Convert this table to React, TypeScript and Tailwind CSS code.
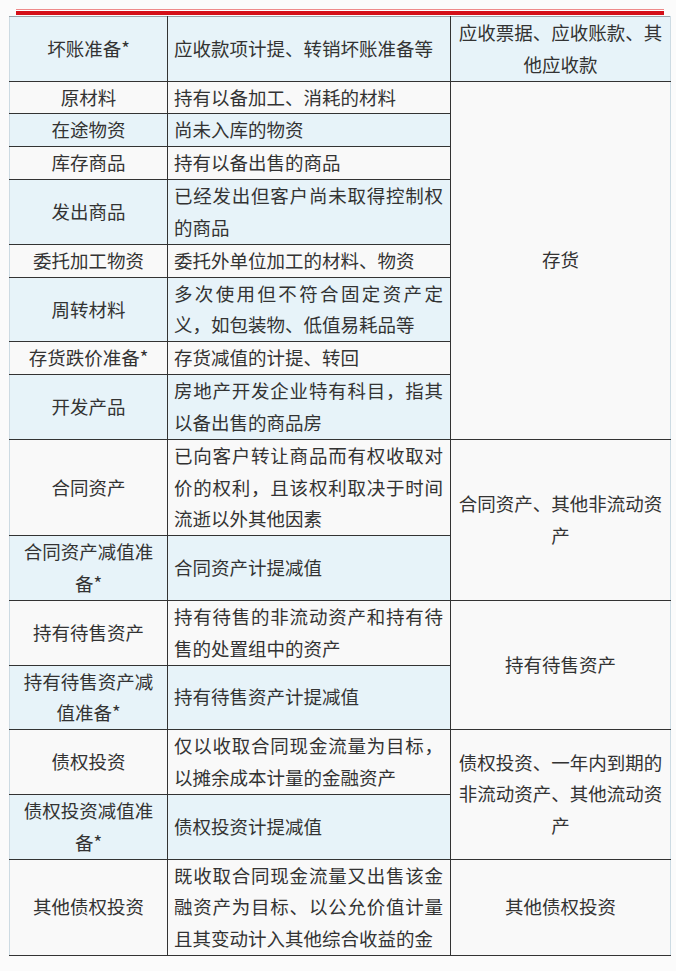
import React from 'react';

type Row = {
  name: string;
  desc: string;
  target?: string;
  span?: number;
};

const rows: Row[] = [
  { name: '坏账准备*', desc: '应收款项计提、转销坏账准备等', target: '应收票据、应收账款、其他应收款', span: 1 },
  { name: '原材料', desc: '持有以备加工、消耗的材料', target: '存货', span: 8 },
  { name: '在途物资', desc: '尚未入库的物资' },
  { name: '库存商品', desc: '持有以备出售的商品' },
  { name: '发出商品', desc: '已经发出但客户尚未取得控制权的商品' },
  { name: '委托加工物资', desc: '委托外单位加工的材料、物资' },
  { name: '周转材料', desc: '多次使用但不符合固定资产定义，如包装物、低值易耗品等' },
  { name: '存货跌价准备*', desc: '存货减值的计提、转回' },
  { name: '开发产品', desc: '房地产开发企业特有科目，指其以备出售的商品房' },
  { name: '合同资产', desc: '已向客户转让商品而有权收取对价的权利，且该权利取决于时间流逝以外其他因素', target: '合同资产、其他非流动资产', span: 2 },
  { name: '合同资产减值准备*', desc: '合同资产计提减值' },
  { name: '持有待售资产', desc: '持有待售的非流动资产和持有待售的处置组中的资产', target: '持有待售资产', span: 2 },
  { name: '持有待售资产减值准备*', desc: '持有待售资产计提减值' },
  { name: '债权投资', desc: '仅以收取合同现金流量为目标，以摊余成本计量的金融资产', target: '债权投资、一年内到期的非流动资产、其他流动资产', span: 2 },
  { name: '债权投资减值准备*', desc: '债权投资计提减值' },
  { name: '其他债权投资', desc: '既收取合同现金流量又出售该金融资产为目标、以公允价值计量且其变动计入其他综合收益的金', target: '其他债权投资', span: 1 },
];

export default function App() {
  return (
    <div
      className="min-h-screen bg-[#fbfbfb] text-[#333] pt-[9px]"
      style={{ fontFamily: '"Noto Sans CJK SC", "Noto Sans", sans-serif' }}
    >
      {/* red double rule */}
      <div className="ml-[16px] mr-[12px]">
        <div className="h-px bg-[#ee8a8a]"></div>
        <div className="h-px bg-white"></div>
        <div className="h-[4px] bg-[#d40f18]"></div>
        <div className="h-px"></div>
      </div>

      <table className="ml-[9px] w-[661px] border-collapse table-fixed text-[18.5px] leading-[31.83px]">
        <colgroup>
          <col className="w-[158px]" />
          <col className="w-[283px]" />
          <col className="w-[220px]" />
        </colgroup>
        <tbody>
          {rows.map((r, i) => {
            const bg = i % 2 === 0 ? 'bg-[#e7f3f9]' : 'bg-[#f9f9f9]';
            const top = i === 0 ? 'border-t-[#9aa4aa]' : 'border-t-[#333]';
            return (
              <tr key={r.name}>
                <td
                  className={`${bg} ${top} border border-[#333] border-l-[#cddbe3] px-[6px] py-0 text-center align-middle`}
                >
                  {r.name}
                </td>
                <td className={`${bg} ${top} border border-[#333] pl-[6px] pr-[7px] py-0 text-justify align-middle`}>
                  {r.desc}
                </td>
                {r.target && (
                  <td
                    rowSpan={r.span}
                    className={`${bg} ${top} border border-[#333] border-r-[#cddbe3] px-[6px] py-0 text-center align-middle`}
                  >
                    {r.target}
                  </td>
                )}
              </tr>
            );
          })}
        </tbody>
      </table>
    </div>
  );
}
